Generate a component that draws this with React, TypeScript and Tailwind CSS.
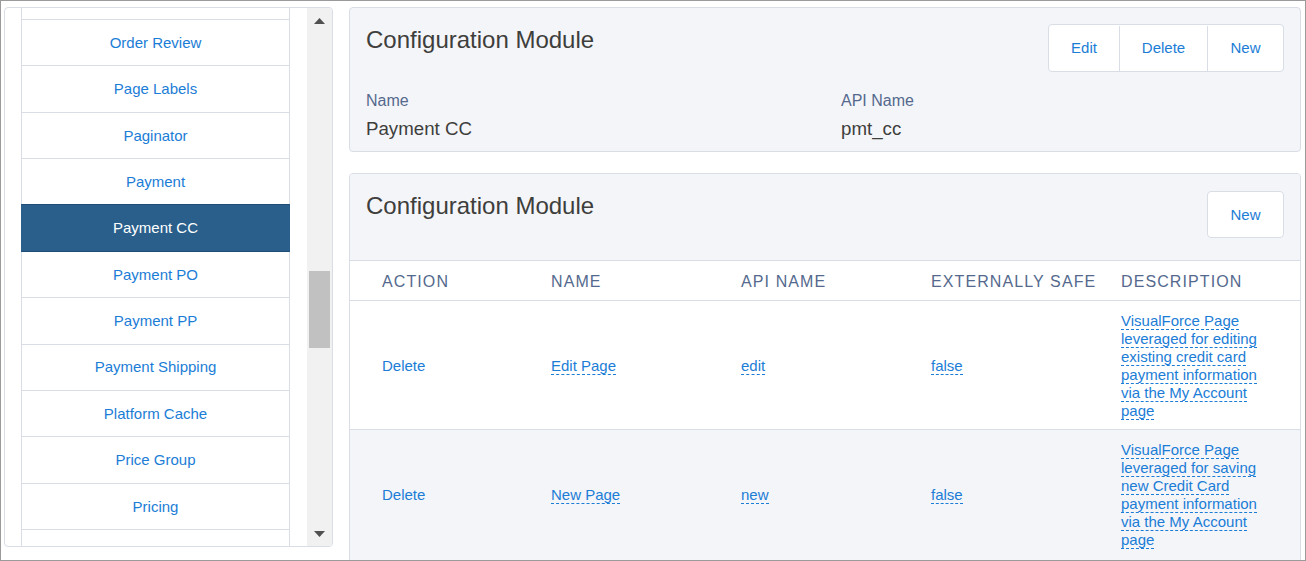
import { clsx } from "clsx";

const LINK = "text-[#1b7dd6]";

const modules = [
  "",
  "Order Review",
  "Page Labels",
  "Paginator",
  "Payment",
  "Payment CC",
  "Payment PO",
  "Payment PP",
  "Payment Shipping",
  "Platform Cache",
  "Price Group",
  "Pricing",
  "",
];

const rows = [
  {
    name: "Edit Page",
    api: "edit",
    safe: "false",
    desc: "VisualForce Page leveraged for editing existing credit card payment information via the My Account page",
  },
  {
    name: "New Page",
    api: "new",
    safe: "false",
    desc: "VisualForce Page leveraged for saving new Credit Card payment information via the My Account page",
  },
];

function Dashed({ children }: { children: React.ReactNode }) {
  return (
    <span className="border-b border-dashed border-[#1b7dd6]">{children}</span>
  );
}

function Sidebar() {
  return (
    <div className="flex h-[540px] w-[329px] shrink-0 overflow-hidden rounded-[4px] border border-[#d8dde6] bg-white pl-4">
      <div className="w-[269px] shrink-0 overflow-hidden">
        {modules.map((label, i) => {
          const selected = label === "Payment CC";
          const partial = i === 0;
          return (
            <div
              className={clsx(
                "flex items-center justify-center border-x border-b pt-px text-[15px]",
                partial ? "h-[12px]" : "h-[46.36px]",
                selected
                  ? "relative -mt-px h-[47.36px] border-t border-x-[#2a5f8c] border-y-[#1f4c75] bg-[#2a5f8c] text-white"
                  : "border-[#d8dde6] text-[#1b7dd6]"
              )}
              key={i}
            >
              {label}
            </div>
          );
        })}
      </div>
      {/* scrollbar */}
      <div className="ml-[17px] flex w-[25px] shrink-0 flex-col bg-[#f1f1f1]">
        <div className="flex h-[26px] items-center justify-center">
          <svg height="6" viewBox="0 0 11 6" width="11">
            <polygon fill="#505050" points="0,6 5.5,0 11,6" />
          </svg>
        </div>
        <div className="flex-1 px-[2px]">
          <div className="mt-[237px] h-[77px] bg-[#c1c1c1]" />
        </div>
        <div className="flex h-[25px] items-center justify-center">
          <svg height="6" viewBox="0 0 11 6" width="11">
            <polygon fill="#505050" points="0,0 11,0 5.5,6" />
          </svg>
        </div>
      </div>
    </div>
  );
}

function DetailCard() {
  return (
    <div className="rounded-[4px] border border-[#d8dde6] bg-[#f4f5f9] px-4 pt-4 pb-[10px]">
      <div className="flex items-start justify-between">
        <h2 className="pt-px text-[24px] leading-[30px] text-[#3e3e3c]">
          Configuration Module
        </h2>
        <div
          className={clsx(
            "flex h-[48px] rounded-[4px] border border-[#d8dde6] bg-white pt-px text-[15px]",
            LINK
          )}
        >
          <button className="w-[70px]" type="button">
            Edit
          </button>
          <button className="w-[88px] border-l border-[#d8dde6]" type="button">
            Delete
          </button>
          <button className="w-[76px] border-l border-[#d8dde6]" type="button">
            New
          </button>
        </div>
      </div>
      <div className="mt-[18px] grid grid-cols-[475px_1fr]">
        <div>
          <div className="pt-px text-[16px] leading-[20px] text-[#54698d]">
            Name
          </div>
          <div className="mt-[5px] pt-px text-[18.7px] leading-[24px] text-[#3e3e3c]">
            Payment CC
          </div>
        </div>
        <div>
          <div className="pt-px text-[16px] leading-[20px] text-[#54698d]">
            API Name
          </div>
          <div className="mt-[5px] pt-px text-[18.7px] leading-[24px] text-[#3e3e3c]">
            pmt_cc
          </div>
        </div>
      </div>
    </div>
  );
}

function PagesCard() {
  const cols = "grid grid-cols-[201px_190px_190px_190px_1fr]";
  return (
    <div className="mt-[21px] overflow-hidden rounded-t-[4px] border border-[#d8dde6] bg-white">
      <div className="flex items-start justify-between border-b border-[#d8dde6] bg-[#f4f5f9] px-4 pt-[17px] pb-[22px]">
        <h2 className="text-[24px] leading-[30px] text-[#3e3e3c]">
          Configuration Module
        </h2>
        <button
          className={clsx(
            "h-[47px] w-[77px] rounded-[4px] border border-[#d8dde6] bg-white pt-px text-[15px]",
            LINK
          )}
          type="button"
        >
          New
        </button>
      </div>
      <div
        className={clsx(
          cols,
          "h-[40px] items-center border-b border-[#d8dde6] pt-[2px] text-[16px] tracking-[1.1px] text-[#54698d]"
        )}
      >
        <div className="pl-8">ACTION</div>
        <div>NAME</div>
        <div>API NAME</div>
        <div className="whitespace-nowrap">EXTERNALLY SAFE</div>
        <div>DESCRIPTION</div>
      </div>
      {rows.map((row, i) => (
        <div
          className={clsx(
            cols,
            "items-center pt-[11px] pb-[9px] text-[15px] leading-[18px]",
            LINK,
            i === 0 ? "border-b border-[#d8dde6] bg-white" : "bg-[#f4f5f9]"
          )}
          key={row.api}
        >
          <div className="pl-8">Delete</div>
          <div>
            <Dashed>{row.name}</Dashed>
          </div>
          <div>
            <Dashed>{row.api}</Dashed>
          </div>
          <div>
            <Dashed>{row.safe}</Dashed>
          </div>
          <div className="pr-[33px]">
            <Dashed>{row.desc}</Dashed>
          </div>
        </div>
      ))}
      {/* rest of the list, below the fold */}
      <div className="h-[12px] bg-[#f4f5f9]" />
    </div>
  );
}

export default function App() {
  return (
    <div className="flex h-[561px] w-[1306px] overflow-hidden border border-[#9a9a9a] bg-white pt-[6px] pr-1 pl-[3px] font-['Liberation_Sans',Arial,sans-serif]">
      <Sidebar />
      <div className="ml-4 w-[952px] shrink-0">
        <DetailCard />
        <PagesCard />
      </div>
    </div>
  );
}
